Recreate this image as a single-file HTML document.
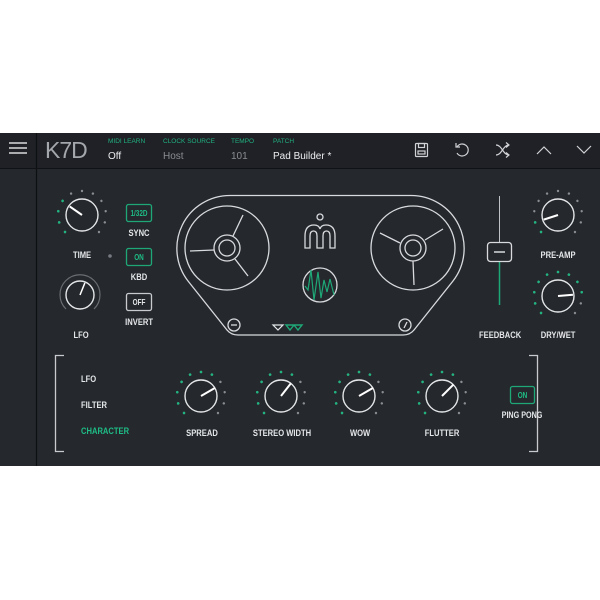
<!DOCTYPE html>
<html><head><meta charset="utf-8"><style>
html,body{margin:0;padding:0;background:#fff;}
svg{display:block}
text{font-family:"Liberation Sans",sans-serif;}
.lb{font-size:9.5px;font-weight:bold;fill:#e4e6e8;text-anchor:middle;transform-box:fill-box;transform-origin:center;transform:scaleX(0.8);}
.ls{font-size:9.5px;font-weight:bold;fill:#e4e6e8;transform-box:fill-box;transform-origin:left center;transform:scaleX(0.8);}
.sm{font-size:6.5px;fill:#21b07e;}
.val{font-size:10px;}
</style></head><body>
<svg width="600" height="600" viewBox="0 0 600 600">
<defs>
<g id="dots">
<circle cx="0" cy="-24" r="1.2" transform="rotate(-135)"/>
<circle cx="0" cy="-24" r="1.2" transform="rotate(-108)"/>
<circle cx="0" cy="-24" r="1.2" transform="rotate(-81)"/>
<circle cx="0" cy="-24" r="1.2" transform="rotate(-54)"/>
<circle cx="0" cy="-24" r="1.2" transform="rotate(-27)"/>
<circle cx="0" cy="-24" r="1.2" transform="rotate(0)"/>
<circle cx="0" cy="-24" r="1.2" transform="rotate(27)"/>
<circle cx="0" cy="-24" r="1.2" transform="rotate(54)"/>
<circle cx="0" cy="-24" r="1.2" transform="rotate(81)"/>
<circle cx="0" cy="-24" r="1.2" transform="rotate(108)"/>
<circle cx="0" cy="-24" r="1.2" transform="rotate(135)"/>
</g>
</defs>
<rect x="0" y="133" width="600" height="333" fill="#25282d"/>
<rect x="0" y="133" width="600" height="35" fill="#1f2126"/>
<line x1="36.5" y1="133" x2="36.5" y2="466" stroke="#0e0f11" stroke-width="1.2"/>
<line x1="0" y1="168.5" x2="600" y2="168.5" stroke="#111215" stroke-width="1"/>
<g stroke="#d8dadc" stroke-width="1.4">
<line x1="9" y1="143" x2="27" y2="143"/><line x1="9" y1="148" x2="27" y2="148"/><line x1="9" y1="153" x2="27" y2="153"/></g>
<text x="45" y="158" style="font-size:23px;fill:#a4a7ac;font-weight:normal;letter-spacing:-1px">K7D</text>
<text x="108" y="143" class="sm">MIDI LEARN</text>
<text x="108" y="159" class="val" fill="#eceef0">Off</text>
<text x="163" y="143" class="sm">CLOCK SOURCE</text>
<text x="163" y="159" class="val" fill="#8a8d92">Host</text>
<text x="231" y="143" class="sm">TEMPO</text>
<text x="231" y="159" class="val" fill="#8a8d92">101</text>
<text x="273" y="143" class="sm">PATCH</text>
<text x="273" y="159" class="val" fill="#eceef0">Pad Builder *</text>
<g stroke="#d0d2d5" stroke-width="1.2" fill="none">
<rect x="415.5" y="143.5" width="12" height="13" rx="1"/><rect x="418.5" y="143.5" width="6" height="4"/><rect x="418" y="151" width="7" height="3"/>
<path d="M457 147 A6 6 0 1 1 457 153"/><path d="M456 143 L456 147 L460 147"/>
<path d="M496 145 C502 145 503 155 509 155 M496 155 C502 155 503 145 509 145 M506 142.5 L509 145 L506 147.5 M506 152.5 L509 155 L506 157.5"/>
<path d="M537 154 L544 147 L551 154"/>
<path d="M577 146 L584 153 L591 146"/>
</g>
<g transform="translate(82,215)">
<use href="#dots" fill="#8a8d92"/>
<g fill="#20b47f"><circle cx="0" cy="-24" r="1.3" transform="rotate(-135)"/><circle cx="0" cy="-24" r="1.3" transform="rotate(-108)"/><circle cx="0" cy="-24" r="1.3" transform="rotate(-81)"/><circle cx="0" cy="-24" r="1.3" transform="rotate(-54)"/></g>
<circle r="16" fill="none" stroke="#e4e6e8" stroke-width="1.4"/>
<line x1="0" y1="0" x2="0" y2="-15" stroke="#fff" stroke-width="2" transform="rotate(-55)"/>
</g>
<text x="82" y="258" class="lb">TIME</text>
<circle cx="110" cy="256" r="1.8" fill="#777a80"/>
<g transform="translate(80,295)">
<path d="M-14 14 A20 20 0 1 1 14 14" fill="none" stroke="#6a6d72" stroke-width="1.2"/>
<circle r="14" fill="none" stroke="#e4e6e8" stroke-width="1.4"/>
<line x1="0" y1="0" x2="0" y2="-13" stroke="#fff" stroke-width="1.5" transform="rotate(22)"/>
</g>
<text x="81" y="338" class="lb">LFO</text>
<rect x="126.5" y="204.5" width="25" height="17" rx="2" fill="none" stroke="#1ea877" stroke-width="1.3"/>
<text x="139" y="216" class="lb" style="font-size:8px;fill:#1ebd85">1/32D</text>
<text x="139" y="236" class="lb">SYNC</text>
<rect x="126.5" y="248.5" width="25" height="17" rx="2" fill="none" stroke="#1ea877" stroke-width="1.3"/>
<text x="139" y="260" class="lb" style="font-size:8px;fill:#1ebd85">ON</text>
<text x="139" y="280" class="lb">KBD</text>
<rect x="126.5" y="293.5" width="25" height="17" rx="2" fill="none" stroke="#c8cacd" stroke-width="1.3"/>
<text x="139" y="305" class="lb" style="font-size:8px">OFF</text>
<text x="139" y="325" class="lb">INVERT</text>
<g fill="none" stroke="#d8dadd" stroke-width="1.3">
<path d="M230 195.5 L411 195.5 A53 53 0 0 1 453 281 L414 330 Q410 335 403 335 L238 335 Q231 335 227 330 L188 281 A53 53 0 0 1 230 195.5 Z"/>
<circle cx="227" cy="248" r="42"/>
<circle cx="227" cy="248" r="13"/><circle cx="227" cy="248" r="8"/>
<line x1="190" y1="251" x2="214" y2="250"/>
<line x1="233" y1="236" x2="243" y2="215"/>
<line x1="235" y1="259" x2="248" y2="276"/>
<circle cx="413" cy="248" r="42"/>
<circle cx="413" cy="248" r="13"/><circle cx="413" cy="248" r="8"/>
<line x1="380" y1="233" x2="400" y2="243"/>
<line x1="425" y1="240" x2="443" y2="229"/>
<line x1="413" y1="261" x2="414" y2="285"/>
<circle cx="234" cy="325" r="6"/><line x1="231" y1="325" x2="237" y2="325"/>
<circle cx="405" cy="325" r="6"/><line x1="404" y1="328" x2="407" y2="322"/>
<circle cx="320" cy="217" r="3"/>
<path d="M305 248 L305 236 Q305 225 314 225 Q319 225 320 229 Q321 225 326 225 Q335 225 335 236 L335 248 L330 248 L330 236 Q330 231 326.5 231 Q323 231 323 236 L323 248 L317 248 L317 236 Q317 231 313.5 231 Q310 231 310 236 L310 248 Z"/>
<circle cx="320" cy="285" r="17"/>
</g>
<path d="M305 286 L308 290 L311 270 L314 300 L318 272 L321 298 L324 280 L327 292 L330 279 L334 295" fill="none" stroke="#1ea877" stroke-width="1.2"/>
<path d="M273 325 L283 325 L278 330 Z" fill="none" stroke="#e4e6e8" stroke-width="1.2"/>
<path d="M286 325 L294 325 L290 330 Z M294 325 L302 325 L298 330 Z" fill="none" stroke="#1ea877" stroke-width="1.4"/>
<line x1="499.5" y1="196" x2="499.5" y2="242" stroke="#c0c2c5" stroke-width="1"/>
<line x1="499.5" y1="262" x2="499.5" y2="305" stroke="#1ea877" stroke-width="1.5"/>
<rect x="487.5" y="242.5" width="24" height="19" rx="3" fill="#25282d" stroke="#d8dadd" stroke-width="1.3"/>
<line x1="494" y1="252" x2="505" y2="252" stroke="#d8dadd" stroke-width="1.5"/>
<text x="500" y="338" class="lb">FEEDBACK</text>
<g transform="translate(558,215)">
<use href="#dots" fill="#8a8d92"/>
<g fill="#20b47f"><circle cx="0" cy="-24" r="1.3" transform="rotate(-135)"/><circle cx="0" cy="-24" r="1.3" transform="rotate(-108)"/></g>
<circle r="16" fill="none" stroke="#e4e6e8" stroke-width="1.4"/>
<line x1="0" y1="0" x2="0" y2="-15" stroke="#fff" stroke-width="2" transform="rotate(-108)"/>
</g>
<text x="558" y="258" class="lb">PRE-AMP</text>
<g transform="translate(558,296)">
<use href="#dots" fill="#8a8d92"/>
<g fill="#20b47f"><circle cx="0" cy="-24" r="1.3" transform="rotate(-135)"/><circle cx="0" cy="-24" r="1.3" transform="rotate(-108)"/><circle cx="0" cy="-24" r="1.3" transform="rotate(-81)"/><circle cx="0" cy="-24" r="1.3" transform="rotate(-54)"/><circle cx="0" cy="-24" r="1.3" transform="rotate(-27)"/><circle cx="0" cy="-24" r="1.3" transform="rotate(0)"/><circle cx="0" cy="-24" r="1.3" transform="rotate(27)"/><circle cx="0" cy="-24" r="1.3" transform="rotate(54)"/><circle cx="0" cy="-24" r="1.3" transform="rotate(81)"/></g>
<circle r="16" fill="none" stroke="#e4e6e8" stroke-width="1.4"/>
<line x1="0" y1="0" x2="0" y2="-15" stroke="#fff" stroke-width="2" transform="rotate(85)"/>
</g>
<text x="558" y="338" class="lb">DRY/WET</text>
<path d="M64 355.5 L55.5 355.5 L55.5 451.5 L64 451.5" fill="none" stroke="#c8cacd" stroke-width="1.3"/>
<path d="M529 355.5 L537.5 355.5 L537.5 451.5 L529 451.5" fill="none" stroke="#c8cacd" stroke-width="1.3"/>
<text x="81" y="382" class="ls">LFO</text>
<text x="81" y="408" class="ls">FILTER</text>
<text x="81" y="434" class="ls" style="fill:#1ebd85">CHARACTER</text>
<g transform="translate(201,396)">
<use href="#dots" fill="#8a8d92"/>
<g fill="#20b47f"><circle cx="0" cy="-24" r="1.3" transform="rotate(-135)"/><circle cx="0" cy="-24" r="1.3" transform="rotate(-108)"/><circle cx="0" cy="-24" r="1.3" transform="rotate(-81)"/><circle cx="0" cy="-24" r="1.3" transform="rotate(-54)"/><circle cx="0" cy="-24" r="1.3" transform="rotate(-27)"/><circle cx="0" cy="-24" r="1.3" transform="rotate(0)"/><circle cx="0" cy="-24" r="1.3" transform="rotate(27)"/></g>
<circle r="16" fill="none" stroke="#e4e6e8" stroke-width="1.4"/>
<line x1="0" y1="0" x2="0" y2="-16" stroke="#fff" stroke-width="2" transform="rotate(60)"/>
</g>
<text x="202" y="436" class="lb">SPREAD</text>
<g transform="translate(281,396)">
<use href="#dots" fill="#8a8d92"/>
<g fill="#20b47f"><circle cx="0" cy="-24" r="1.3" transform="rotate(-135)"/><circle cx="0" cy="-24" r="1.3" transform="rotate(-108)"/><circle cx="0" cy="-24" r="1.3" transform="rotate(-81)"/><circle cx="0" cy="-24" r="1.3" transform="rotate(-54)"/><circle cx="0" cy="-24" r="1.3" transform="rotate(-27)"/><circle cx="0" cy="-24" r="1.3" transform="rotate(0)"/><circle cx="0" cy="-24" r="1.3" transform="rotate(27)"/></g>
<circle r="16" fill="none" stroke="#e4e6e8" stroke-width="1.4"/>
<line x1="0" y1="0" x2="0" y2="-16" stroke="#fff" stroke-width="2" transform="rotate(38)"/>
</g>
<text x="282" y="436" class="lb">STEREO WIDTH</text>
<g transform="translate(359,396)">
<use href="#dots" fill="#8a8d92"/>
<g fill="#20b47f"><circle cx="0" cy="-24" r="1.3" transform="rotate(-135)"/><circle cx="0" cy="-24" r="1.3" transform="rotate(-108)"/><circle cx="0" cy="-24" r="1.3" transform="rotate(-81)"/><circle cx="0" cy="-24" r="1.3" transform="rotate(-54)"/><circle cx="0" cy="-24" r="1.3" transform="rotate(-27)"/><circle cx="0" cy="-24" r="1.3" transform="rotate(0)"/><circle cx="0" cy="-24" r="1.3" transform="rotate(27)"/></g>
<circle r="16" fill="none" stroke="#e4e6e8" stroke-width="1.4"/>
<line x1="0" y1="0" x2="0" y2="-16" stroke="#fff" stroke-width="2" transform="rotate(60)"/>
</g>
<text x="360" y="436" class="lb">WOW</text>
<g transform="translate(442,396)">
<use href="#dots" fill="#8a8d92"/>
<g fill="#20b47f"><circle cx="0" cy="-24" r="1.3" transform="rotate(-135)"/><circle cx="0" cy="-24" r="1.3" transform="rotate(-108)"/><circle cx="0" cy="-24" r="1.3" transform="rotate(-81)"/><circle cx="0" cy="-24" r="1.3" transform="rotate(-54)"/><circle cx="0" cy="-24" r="1.3" transform="rotate(-27)"/><circle cx="0" cy="-24" r="1.3" transform="rotate(0)"/><circle cx="0" cy="-24" r="1.3" transform="rotate(27)"/></g>
<circle r="16" fill="none" stroke="#e4e6e8" stroke-width="1.4"/>
<line x1="0" y1="0" x2="0" y2="-16" stroke="#fff" stroke-width="2" transform="rotate(45)"/>
</g>
<text x="442" y="436" class="lb">FLUTTER</text>
<rect x="510.5" y="386.5" width="24" height="17" rx="2" fill="none" stroke="#1ea877" stroke-width="1.3"/>
<text x="522.5" y="398" class="lb" style="font-size:8px;fill:#1ebd85">ON</text>
<text x="522" y="418" class="lb" style="font-size:9px">PING PONG</text>
</svg>
</body></html>
